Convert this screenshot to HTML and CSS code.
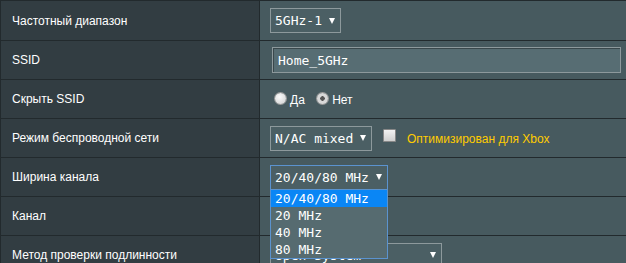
FILE: index.html
```html
<!DOCTYPE html>
<html lang="ru">

<head>
    <meta charset="UTF-8">
    <meta name="viewport" content="width=device-width, initial-scale=1.0">
    <title>Беспроводная сеть - Общие</title>
    <link rel="stylesheet" href="styles.css">
</head>

<body>

    <!-- таблица настроек беспроводной сети -->
    <table class="form-table">
        <tr class="row-first">
            <th>Частотный диапазон</th>
            <td>
                <div class="select"><span>5GHz-1</span></div>
            </td>
        </tr>
        <tr>
            <th>SSID</th>
            <td>
                <input class="input-text" type="text" value="Home_5GHz">
            </td>
        </tr>
        <tr>
            <th>Скрыть SSID</th>
            <td>
                <label class="radio"><span class="radio-dot"></span>Да</label>
                <label class="radio"><span class="radio-dot checked"></span>Нет</label>
            </td>
        </tr>
        <tr>
            <th>Режим беспроводной сети</th>
            <td>
                <div class="select"><span>N/AC mixed</span></div>
                <span class="checkbox"></span>
                <span class="xbox">Оптимизирован для Xbox</span>
            </td>
        </tr>
        <tr>
            <th>Ширина канала</th>
            <td>
                <div class="select focused">
                    <span>20/40/80 MHz</span>
                    <!-- раскрытый список -->
                    <ul class="dropdown">
                        <li class="active">20/40/80 MHz</li>
                        <li>20 MHz</li>
                        <li>40 MHz</li>
                        <li>80 MHz</li>
                    </ul>
                </div>
            </td>
        </tr>
        <tr>
            <th>Канал</th>
            <td>
                <div class="select"><span>Auto</span></div>
            </td>
        </tr>
        <tr>
            <th>Метод проверки подлинности</th>
            <td>
                <div class="select select-wide"><span>Open System</span></div>
            </td>
        </tr>
    </table>

</body>

</html>
```

FILE: styles.css
```css
* {
    margin: 0;
    padding: 0;
}

body {
    background: #475A5F;
    overflow: hidden;
    font-family: "Liberation Sans", Arial, sans-serif;
    font-size: 12px;
    color: #fff;
}

.form-table {
    width: 640px;
    border-collapse: collapse;
}

.form-table th,
.form-table td {
    height: 38px;
    border: 1px solid #222a2d;
    vertical-align: middle;
}

.form-table .row-first th,
.form-table .row-first td {
    height: 39px;
}

.form-table th {
    width: 247px;
    padding-left: 11px;
    background: #323D42;
    font-weight: normal;
    text-align: left;
}

.form-table td {
    padding-left: 10px;
    background: #475A5F;
}

/* выпадающий список */
.select {
    display: inline-flex;
    align-items: center;
    position: relative;
    height: 25px;
    box-sizing: border-box;
    padding: 0 5px 0 4px;
    border: 1px solid #8d999c;
    background: #4B5F64;
    font-family: "DejaVu Sans Mono", "Liberation Mono", monospace;
    font-size: 13px;
    vertical-align: middle;
}

.select::after {
    content: "";
    margin-left: 7px;
    border-left: 3px solid transparent;
    border-right: 3px solid transparent;
    border-top: 6px solid #fff;
}

.select-wide {
    width: 172px;
    justify-content: space-between;
}

.select.focused {
    border-color: #5b93cf;
    /* список должен лежать поверх следующих строк */
    z-index: 10;
}

.dropdown {
    position: absolute;
    left: -1px;
    top: 23px;
    width: 118px;
    box-sizing: border-box;
    border: 1px solid #5b93cf;
    background: #566B70;
    list-style: none;
}

.dropdown li {
    height: 17px;
    line-height: 17px;
    padding-left: 4px;
}

.dropdown li.active {
    background: #0a86f5;
}

.input-text {
    width: 349px;
    height: 26px;
    margin-left: 2px;
    box-sizing: border-box;
    padding-left: 5px;
    border: 1px solid #8d999c;
    box-shadow: inset 1px 1px 0 #3a484c;
    background: #576D73;
    color: #fff;
    font-family: "DejaVu Sans Mono", "Liberation Mono", monospace;
    font-size: 13px;
    vertical-align: middle;
}

/* переключатели */
.radio {
    display: inline-flex;
    align-items: center;
    margin-left: 5px;
    margin-right: 4px;
    padding-top: 2px;
}

.radio-dot {
    width: 11px;
    height: 11px;
    margin-right: 4px;
    margin-top: -4px;
    border-radius: 50%;
    background: radial-gradient(circle at 40% 35%, #fafafa, #cfcfcf);
    box-shadow: 0 0 0 1px #9a9a9a;
    box-sizing: border-box;
}

.radio-dot.checked {
    background: radial-gradient(circle, #555 0 2px, #d8d8d8 2.5px);
}

.checkbox {
    display: inline-block;
    width: 11px;
    height: 11px;
    margin-left: 7px;
    margin-right: 8px;
    border: 1px solid #888;
    border-radius: 1px;
    background: linear-gradient(#f2f2f2, #cfcfcf);
    vertical-align: middle;
    margin-top: -6px;
}

.xbox {
    color: #FFCC00;
    vertical-align: middle;
}
```
